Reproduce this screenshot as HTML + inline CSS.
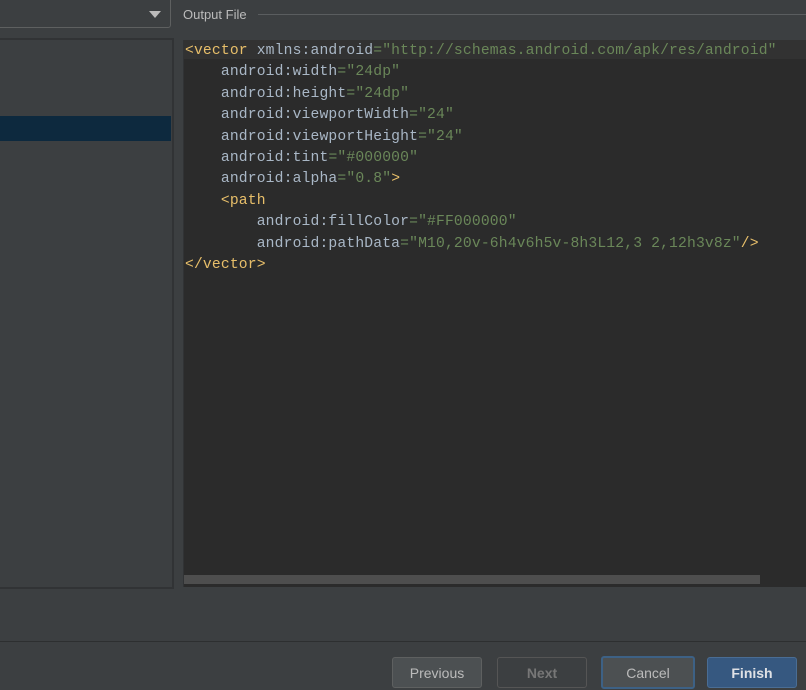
<!DOCTYPE html>
<html><head><style>
body{margin:0;width:806px;height:690px;background:#3c3f41;position:relative;overflow:hidden;font-family:"Liberation Sans",sans-serif}
.abs{position:absolute}
#combo{left:-5px;top:-5px;width:174px;height:31px;border:1px solid #5e6060;border-radius:3px;background:#3c3f41}
#arrow{left:149px;top:11px;width:0;height:0;border-left:6px solid transparent;border-right:6px solid transparent;border-top:7px solid #bbbbbb}
#lbl{left:183px;top:7px;font-size:13px;color:#bbbbbb}
#lline{left:258px;top:14px;width:548px;height:1px;background:#5a5d5f}
#left{left:-2px;top:38px;width:172px;height:547px;border:2px solid #313335;background:#3c3f41}
#sel{left:0;top:116px;width:171px;height:25px;background:#0d293e}
#ed{left:183px;top:40px;width:623px;height:547px;background:#2b2b2b;border-left:1px solid #313335}
#hl{left:184px;top:40px;width:622px;height:19px;background:#323232}
pre{position:absolute;left:185px;top:41px;margin:0;font-family:"Liberation Mono","Courier New",monospace;font-size:14.7px;letter-spacing:0.15px;line-height:21.4px;color:#a9b7c6}
.t{color:#e8bf6a}.s{color:#6a8759}
#sb{left:184px;top:575px;width:576px;height:9px;background:#4e4e4e}
#sep{left:0;top:641px;width:806px;height:1px;background:#2d2f30}
.b{position:absolute;top:657px;height:29px;border:1px solid #5e6060;border-radius:3px;background:#4c5052;color:#bbbbbb;font-size:14px;text-align:center;line-height:30px;box-sizing:content-box}
</style></head><body>
<div class="abs" id="combo"></div><div class="abs" id="arrow"></div>
<div class="abs" id="lbl">Output File</div><div class="abs" id="lline"></div>
<div class="abs" id="left"></div><div class="abs" id="sel"></div>
<div class="abs" id="ed"></div><div class="abs" id="hl"></div>
<pre><span class="t">&lt;vector</span> xmlns:android<span class="s">="http://schemas.android.com/apk/res/android"</span>
    android:width<span class="s">="24dp"</span>
    android:height<span class="s">="24dp"</span>
    android:viewportWidth<span class="s">="24"</span>
    android:viewportHeight<span class="s">="24"</span>
    android:tint<span class="s">="#000000"</span>
    android:alpha<span class="s">="0.8"</span><span class="t">&gt;</span>
    <span class="t">&lt;path</span>
        android:fillColor<span class="s">="#FF000000"</span>
        android:pathData<span class="s">="M10,20v-6h4v6h5v-8h3L12,3 2,12h3v8z"</span><span class="t">/&gt;</span>
<span class="t">&lt;/vector&gt;</span></pre>
<div class="abs" id="sb"></div>
<div class="abs" id="sep"></div>
<div class="b" style="left:392px;width:88px">Previous</div>
<div class="b" style="left:497px;width:88px;background:#3c3f41;color:#777;font-weight:bold;border-color:#555">Next</div>
<div class="b" style="left:601px;width:90px;border:2px solid #3d6185;top:656px">Cancel</div>
<div class="b" style="left:707px;width:88px;background:#365880;border-color:#4a6d94;color:#dfe1e5;font-weight:bold">Finish</div>
</body></html>
